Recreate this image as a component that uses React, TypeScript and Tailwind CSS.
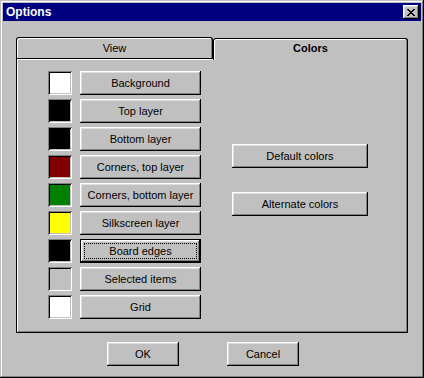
import React from "react";

const raised =
  "shadow-[inset_-1px_-1px_0_#000,inset_1px_1px_0_#fff,inset_-2px_-2px_0_#808080,inset_2px_2px_0_#dfdfdf]";
const sunken =
  "shadow-[inset_1px_1px_0_#808080,inset_-1px_-1px_0_#fff,inset_2px_2px_0_#000,inset_-2px_-2px_0_#c0c0c0]";

function Btn({
  label,
  w,
  def,
}: {
  label: string;
  w: string;
  def?: boolean;
}) {
  if (def) {
    return (
      <div className={`${w} h-[24px] border border-black bg-[#c0c0c0]`}>
        <div
          className={`w-full h-full ${raised} flex items-center justify-center p-[3px]`}
        >
          <div className="w-full h-full border border-dotted border-black flex items-center justify-center">
            {label}
          </div>
        </div>
      </div>
    );
  }
  return (
    <div
      className={`${w} h-[24px] bg-[#c0c0c0] ${raised} flex items-center justify-center`}
    >
      {label}
    </div>
  );
}

const rows: { label: string; color: string; def?: boolean }[] = [
  { label: "Background", color: "#ffffff" },
  { label: "Top layer", color: "#000000" },
  { label: "Bottom layer", color: "#000000" },
  { label: "Corners, top layer", color: "#800000" },
  { label: "Corners, bottom layer", color: "#008000" },
  { label: "Silkscreen layer", color: "#ffff00" },
  { label: "Board edges", color: "#000000", def: true },
  { label: "Selected items", color: "#c0c0c0" },
  { label: "Grid", color: "#ffffff" },
];

export default function App() {
  return (
    <div
      className="w-[424px] h-[378px] bg-[#c0c0c0] p-[3px] flex flex-col text-[11px] text-black shadow-[inset_-1px_-1px_0_#000,inset_1px_1px_0_#c0c0c0,inset_-2px_-2px_0_#808080,inset_2px_2px_0_#fff]"
      style={{ fontFamily: '"Liberation Sans", Arial, sans-serif' }}
    >
      {/* Title bar */}
      <div className="h-[18px] bg-[#000080] flex items-center justify-between pl-[3px] pr-[2px]">
        <span className="text-white font-bold text-[12px] leading-none">
          Options
        </span>
        <div
          className={`w-[16px] h-[14px] bg-[#c0c0c0] ${raised} flex items-center justify-center`}
        >
          <svg width="8" height="7" viewBox="0 0 8 7" shapeRendering="crispEdges">
            <path
              fill="#000"
              d="M0 0h2v1h-2zM6 0h2v1h-2zM1 1h2v1h-2zM5 1h2v1h-2zM2 2h4v1h-4zM3 3h2v1h-2zM2 4h4v1h-4zM1 5h2v1h-2zM5 5h2v1h-2zM0 6h2v1h-2zM6 6h2v1h-2z"
            />
          </svg>
        </div>
      </div>

      {/* Body */}
      <div className="flex flex-col pl-[13px] pt-[15px]">
        <div className="w-[392px] flex flex-col">
          {/* Tabs */}
          <div className="flex h-[22px] items-end relative z-10">
            <div className="w-[197px] h-[21px] border-t border-l border-r border-black rounded-t-[3px] shadow-[inset_1px_1px_0_#fff,inset_-1px_0_0_#808080] flex items-center justify-center">
              View
            </div>
            <div className="flex-1 h-[22px] -mb-[2px] pb-[2px] bg-[#c0c0c0] border-t border-l border-r border-black rounded-t-[3px] shadow-[inset_1px_1px_0_#fff,inset_-1px_0_0_#808080] flex items-center justify-center font-bold">
              Colors
            </div>
          </div>
          {/* Panel */}
          <div className="h-[275px] border border-black shadow-[inset_1px_1px_0_#fff,inset_-1px_-1px_0_#808080] flex pl-[31px] pt-[12px]">
            <div className="flex flex-col gap-[4px]">
              {rows.map((r) => (
                <div key={r.label} className="flex items-center gap-[8px]">
                  <div
                    className={`w-[24px] h-[24px] ${sunken}`}
                    style={{ backgroundColor: r.color }}
                  />
                  <Btn label={r.label} w="w-[121px]" def={r.def} />
                </div>
              ))}
            </div>
            <div className="flex flex-col gap-[24px] pl-[31px] pt-[73px]">
              <Btn label="Default colors" w="w-[136px]" />
              <Btn label="Alternate colors" w="w-[136px]" />
            </div>
          </div>
        </div>
        {/* Bottom buttons */}
        <div className="flex gap-[48px] pl-[91px] pt-[9px]">
          <Btn label="OK" w="w-[72px]" />
          <Btn label="Cancel" w="w-[72px]" />
        </div>
      </div>
    </div>
  );
}
